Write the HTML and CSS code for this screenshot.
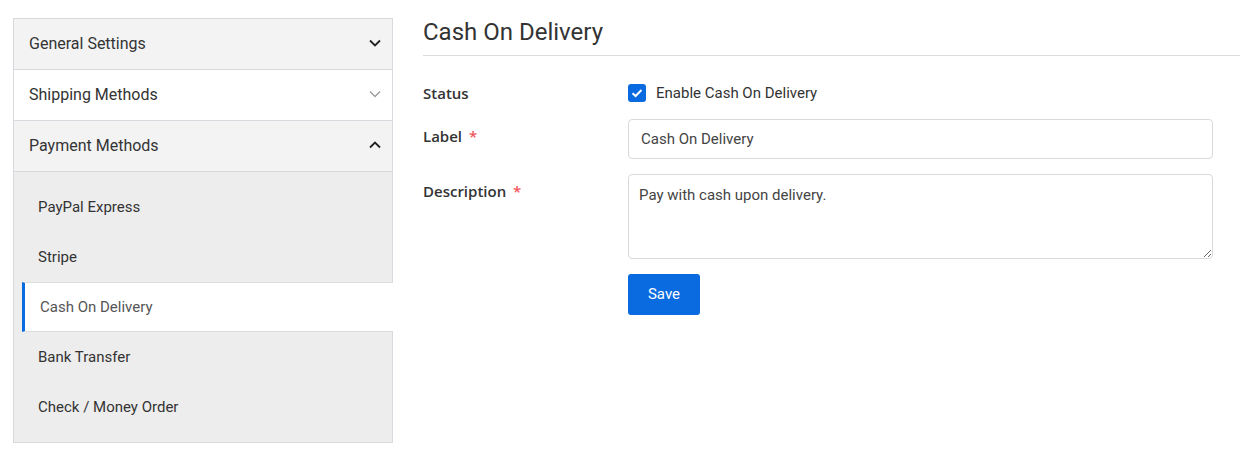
FILE: index.html
```html
<!DOCTYPE html>
<html lang="en">
<head>
    <meta charset="UTF-8">
    <title>Payment Settings</title>
    <link rel="stylesheet" href="styles.css">
</head>
<body>

<aside class="sidebar">
    <div class="menu-head">
        <span>General Settings</span>
        <svg class="chevron" viewBox="0 0 14 14"><polyline points="2,4.5 7,9.5 12,4.5"/></svg>
    </div>
    <div class="menu-head menu-head--light">
        <span>Shipping Methods</span>
        <svg class="chevron chevron--muted" viewBox="0 0 14 14"><polyline points="2,4.5 7,9.5 12,4.5"/></svg>
    </div>
    <div class="menu-head">
        <span>Payment Methods</span>
        <svg class="chevron" viewBox="0 0 14 14"><polyline points="2,9.5 7,4.5 12,9.5"/></svg>
    </div>
    <ul class="submenu">
        <li class="submenu-item">PayPal Express</li>
        <li class="submenu-item">Stripe</li>
        <li class="submenu-item active">Cash On Delivery</li>
        <li class="submenu-item">Bank Transfer</li>
        <li class="submenu-item">Check / Money Order</li>
    </ul>
</aside>

<main class="content">
    <h2 class="page-title">Cash On Delivery</h2>

    <form class="settings-form">
        <div class="form-row form-row--center">
            <label class="form-label">Status</label>
            <label class="check">
                <span class="check-box">
                    <svg viewBox="0 0 18 18"><polyline points="4.5,9.2 7.6,12 13.5,6"/></svg>
                </span>
                Enable Cash On Delivery
            </label>
        </div>
        <div class="form-row">
            <label class="form-label">Label <span class="required">*</span></label>
            <input class="text-input" type="text" value="Cash On Delivery">
        </div>
        <div class="form-row">
            <label class="form-label">Description <span class="required">*</span></label>
            <textarea class="text-area">Pay with cash upon delivery.</textarea>
        </div>
        <div class="form-row">
            <span></span>
            <div><button type="button" class="save-button">Save</button></div>
        </div>
    </form>
</main>

</body>
</html>
```

FILE: styles.css
```css
body {
    margin: 0;
    padding: 18px 0 0 13px;
    display: flex;
    gap: 30px;
    font-family: Roboto, "Liberation Sans", sans-serif;
    color: #333;
    background: #fff;
}

/* sidebar */
.sidebar {
    width: 380px;
    flex-shrink: 0;
    box-sizing: border-box;
    border: 1px solid #d6d9de;
    align-self: flex-start;
}

.menu-head {
    height: 51px;
    box-sizing: border-box;
    border-bottom: 1px solid #d6d9de;
    background: #f3f3f3;
    display: flex;
    justify-content: space-between;
    align-items: center;
    padding: 0 10px 2px 15px;
    font-size: 16px;
}

.menu-head--light {
    background: #fff;
}

.chevron {
    width: 14px;
    height: 14px;
    fill: none;
    stroke: #222;
    stroke-width: 1.8;
}

.chevron--muted {
    stroke: #9a9a9a;
    stroke-width: 1.3;
}

.submenu {
    list-style: none;
    margin: 0;
    padding: 10px 0;
    background: #ededed;
}

.submenu-item {
    height: 50px;
    box-sizing: border-box;
    display: flex;
    align-items: center;
    padding-left: 24px;
    font-size: 15px;
    color: #333;
}

.submenu-item.active {
    margin-left: 8px;
    margin-right: -1px;
    padding-left: 15px;
    background: #fff;
    border-left: 3px solid #0a6ae0;
    border-top: 1px solid #d9dce1;
    border-bottom: 1px solid #d9dce1;
    color: #555;
}

/* main content */
.content {
    flex: 1;
}

.page-title {
    margin: 0;
    font-size: 24px;
    font-weight: 400;
    line-height: 28px;
    padding-bottom: 9px;
    border-bottom: 1px solid #dcdcdc;
    color: #333;
}

.settings-form {
    padding-top: 26px;
    display: flex;
    flex-direction: column;
    gap: 15px;
}

.form-row {
    display: grid;
    grid-template-columns: 205px 585px;
    align-items: start;
}

.form-row--center {
    align-items: center;
}

.form-label {
    font-family: "Open Sans", sans-serif;
    font-weight: 600;
    font-size: 15px;
    line-height: 22px;
    padding-top: 6px;
    color: #333;
}

.form-row--center .form-label {
    padding-top: 0;
}

.required {
    color: #f2555a;
    margin-left: 3px;
}

.check {
    display: flex;
    align-items: center;
    gap: 10px;
    font-size: 15px;
    line-height: 22px;
    color: #333;
}

.check-box {
    width: 18px;
    height: 18px;
    border-radius: 3px;
    background: #0a6ae0;
    display: flex;
}

.check-box svg {
    width: 18px;
    height: 18px;
    fill: none;
    stroke: #fff;
    stroke-width: 2;
}

.text-input,
.text-area {
    box-sizing: border-box;
    width: 100%;
    border: 1px solid #d9d9d9;
    border-radius: 4px;
    font-family: Roboto, "Liberation Sans", sans-serif;
    font-size: 15px;
    color: #444;
    margin: 0;
}

.text-input {
    height: 40px;
    padding: 0 12px;
}

.text-area {
    height: 85px;
    padding: 10px 10px;
    line-height: 20px;
    display: block;
}

.save-button {
    width: 72px;
    height: 41px;
    border: none;
    border-radius: 3px;
    background: #0a6ae0;
    color: #fff;
    font-family: Roboto, "Liberation Sans", sans-serif;
    font-size: 15px;
    padding: 0 0 2px;
    cursor: pointer;
}
```
